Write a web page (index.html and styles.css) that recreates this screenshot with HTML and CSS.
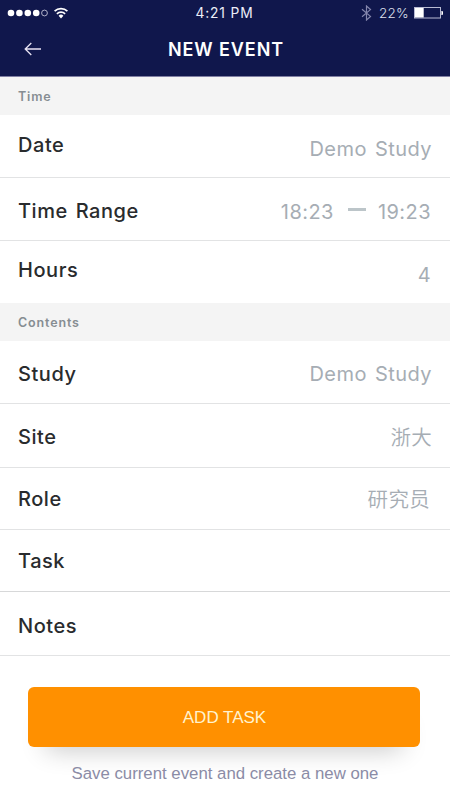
FILE: index.html
```html
<!DOCTYPE html>
<html lang="en">
<head>
<meta charset="utf-8">
<meta name="viewport" content="width=device-width, initial-scale=1">
<title>New Event</title>
<link rel="stylesheet" href="styles.css">
</head>
<body>
<header class="header">
  <div class="status">
    <div class="status-left">
      <svg class="signal" width="42" height="10" viewBox="0 0 42 10"><g fill="#fff"><circle cx="4" cy="5" r="3.3"/><circle cx="12.4" cy="5" r="3.3"/><circle cx="20.8" cy="5" r="3.3"/><circle cx="29.2" cy="5" r="3.3"/></g><circle cx="37.5" cy="5" r="2.9" fill="none" stroke="#d5d6e6" stroke-width=".8"/></svg>
      <svg class="wifi" width="14" height="12" viewBox="0 0 14 12"><g fill="none" stroke="#fff" stroke-width="1.7"><path d="M.6 4.2a9.2 9.2 0 0 1 12.8 0"/><path d="M2.9 6.8a5.9 5.9 0 0 1 8.2 0"/></g><path d="M4.6 8.8a3.4 3.4 0 0 1 4.8 0L7 11.4z" fill="#fff"/></svg>
    </div>
    <div class="clock">4:21 PM</div>
    <div class="status-right">
      <svg class="bluetooth" width="11" height="16" viewBox="0 0 11 16"><path d="M1 4.2l8.5 7.2L5.5 15V1l4 3.6L1 11.8" fill="none" stroke="#8486ad" stroke-width="1.2"/></svg>
      <span class="percent">22%</span>
      <svg class="battery" width="30" height="12" viewBox="0 0 30 12"><rect x=".5" y=".5" width="26" height="10.5" fill="none" stroke="#b9bbd3"/><rect x="1" y="1" width="8.7" height="9.5" fill="#fff"/><path d="M27.4 4h.6a1 1 0 0 1 1 1v2a1 1 0 0 1-1 1h-.6z" fill="#fff"/></svg>
    </div>
  </div>
  <div class="navbar">
    <svg class="back" width="18" height="14" viewBox="0 0 18 14"><path d="M7.3 1L1.2 7l6.1 6M1.2 7H17" fill="none" stroke="#e9e4f4" stroke-width="1.3"/></svg>
    <h1 class="title">NEW EVENT</h1>
  </div>
</header>
<main>
  <h2 class="section">Time</h2>
  <div class="row row-date"><span class="label">Date</span><span class="value">Demo Study</span></div>
  <div class="row row-range"><span class="label">Time Range</span><span class="value range"><span>18:23</span><i class="dash"></i><span>19:23</span></span></div>
  <div class="row row-hours"><span class="label">Hours</span><span class="value">4</span></div>
  <h2 class="section">Contents</h2>
  <div class="row row-study"><span class="label">Study</span><span class="value">Demo Study</span></div>
  <div class="row row-site"><span class="label">Site</span><span class="value cjk" lang="zh">浙大</span></div>
  <div class="row row-role"><span class="label">Role</span><span class="value cjk" lang="zh">研究员</span></div>
  <div class="row row-task"><span class="label">Task</span></div>
  <div class="row row-notes"><span class="label">Notes</span></div>
</main>
<footer class="footer">
  <button class="add" type="button">ADD TASK</button>
  <p class="hint">Save current event and create a new one</p>
</footer>
</body>
</html>
```
FILE: styles.css
```css
* { box-sizing: border-box; }

body {
  margin: 0;
  width: 450px;
  height: 800px;
  overflow: hidden;
  background: #fff;
  font-family: Inter, "Noto Sans CJK SC", sans-serif;
}

svg { display: block; flex: none; }

.header {
  height: 77px;
  background: #10174c;
  border-bottom: 1px solid #807fa3;
  color: #fff;
}

.status {
  display: grid;
  grid-template-columns: 1fr auto 1fr;
  height: 26px;
  align-items: center;
  padding: 0 6px 0 5px;
}

.status-left, .status-right { display: flex; align-items: center; }
.status-left { gap: 5px; padding-left: 2px; }
.status-right { justify-content: flex-end; }
.percent { margin: 0 5px 0 7px; font-size: 13.5px; font-weight: 300; letter-spacing: .3px; color: #dfe0ee; }
.clock { font-size: 13.8px; line-height: 16px; letter-spacing: .85px; color: #eceef8; }

.navbar {
  display: grid;
  grid-template-columns: 1fr auto 1fr;
  align-items: center;
  height: 46px;
  padding: 0 23px 0 24px;
}

.title { margin: 2px 0 0 1px; font-size: 18px; line-height: 24px; font-weight: 600; letter-spacing: .9px; }

.section {
  height: 38px;
  margin: 0;
  padding: 0 18px;
  background: #f4f4f4;
  color: #868d92;
  font-size: 12.5px;
  line-height: 39px;
  font-weight: 600;
  letter-spacing: .85px;
}

.row {
  display: flex;
  justify-content: space-between;
  align-items: flex-start;
  height: 63px;
  padding: 21px 18px 0;
  border-bottom: 1px solid #e2e3e4;
  font-size: 20px;
  line-height: 24px;
}

.label { color: #292b2d; font-weight: 500; letter-spacing: .55px; word-spacing: 2px; }
.value { color: #a6adb4; font-weight: 400; letter-spacing: .45px; word-spacing: 2px; }
.cjk { font-family: "Noto Sans CJK SC", sans-serif; font-size: 20.5px; font-weight: 350; letter-spacing: .3px; }

.row-date { padding-top: 18px; }
.row-date .value { margin-top: 4px; }
.row-range .value { margin-top: 1px; }
.row-hours { height: 62px; padding-top: 17px; border-bottom: 0; }
.row-hours .value { margin: 5px 1px 0 0; }
.row-site { height: 64px; }
.row-site .value { margin-top: -1px; }
.row-role, .row-task { height: 62px; padding-top: 19px; }
.row-role .value { margin: -1px 2px 0 0; }
.row-task { border-color: #d7d8d9; }
.row-notes { height: 64px; padding-top: 22px; }

.range { display: flex; margin-right: 1px; }
.dash { width: 18px; height: 3px; margin: 8px 12px 0 14px; background: #bcc5c9; }

.footer { padding: 31px 30px 0 28px; }

.add {
  display: block;
  width: 392px;
  height: 60px;
  padding: 0 0 0 1px;
  border: 0;
  border-radius: 6px;
  background: #ff9000;
  color: #fff3cf;
  font: 17px/61px "Liberation Sans", sans-serif;
  box-shadow: 0 20px 26px -18px rgba(0, 0, 0, .24);
}

.hint {
  margin: 17px -2px 0 0;
  color: #8b8ca6;
  font: 16.8px/20px "Liberation Sans", sans-serif;
  text-align: center;
}
```
